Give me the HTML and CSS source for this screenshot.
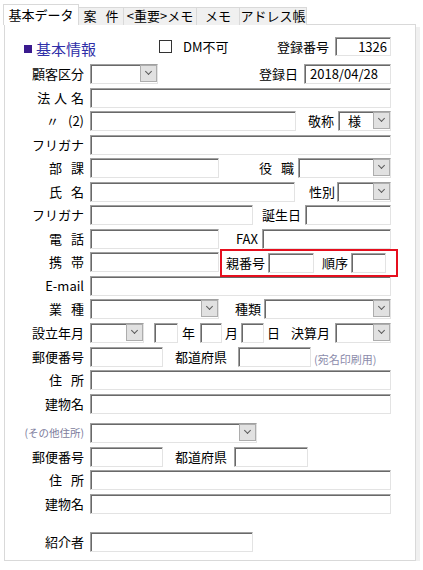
FILE: index.html
```html
<!DOCTYPE html>
<html lang="ja">
<head>
  <meta charset="UTF-8">
  <title>顧客 基本データ</title>
  <meta name="viewport" content="width=device-width, initial-scale=1" />
  <link rel="stylesheet" href="styles.css">
</head>
<body>
  <div class="window">
    <div class="tabs">
      <div class="tab active">基本データ</div>
      <div class="tab wide">案 件</div>
      <div class="tab">&lt;重要&gt;メモ</div>
      <div class="tab">メモ</div>
      <div class="tab">アドレス帳</div>
    </div>

    <div class="panel">
      <div class="head">
        <div class="title"><span class="mark"></span>基本情報</div>
        <span class="check"></span>
        <span class="check-lbl">DM不可</span>
        <span class="side mr6">登録番号</span>
        <div class="in w56 num">1326</div>
      </div>

      <div class="group">
        <div class="row">
          <span class="lbl">顧客区分</span>
          <div class="in sel w68"><span class="val"></span><span class="btn"></span></div>
          <span class="side mr6">登録日</span>
          <div class="in w87 txt">2018/04/28</div>
        </div>
        <div class="row">
          <span class="lbl">法 人 名</span>
          <div class="in full"></div>
        </div>
        <div class="row">
          <span class="lbl wide">〃 (2)</span>
          <div class="in w206"></div>
          <span class="side mr4">敬称</span>
          <div class="in sel w53"><span class="val">様</span><span class="btn"></span></div>
        </div>
        <div class="row">
          <span class="lbl">フリガナ</span>
          <div class="in full"></div>
        </div>
        <div class="row">
          <span class="lbl wide">部 課</span>
          <div class="in w129"></div>
          <span class="side mr4 wide">役 職</span>
          <div class="in sel w93"><span class="val"></span><span class="btn"></span></div>
        </div>
        <div class="row">
          <span class="lbl wide">氏 名</span>
          <div class="in w205"></div>
          <span class="side mr2">性別</span>
          <div class="in sel w54"><span class="val"></span><span class="btn"></span></div>
        </div>
        <div class="row">
          <span class="lbl">フリガナ</span>
          <div class="in w163"></div>
          <span class="side mr4">誕生日</span>
          <div class="in w86"></div>
        </div>
        <div class="row">
          <span class="lbl wide">電 話</span>
          <div class="in w129"></div>
          <span class="side mr4">FAX</span>
          <div class="in w129"></div>
        </div>
        <div class="row">
          <span class="lbl wide">携 帯</span>
          <div class="in w129"></div>
          <div class="oya">
            <span>親番号</span>
            <div class="in w46 ml3"></div>
            <span class="ml8">順序</span>
            <div class="in w35 ml3"></div>
          </div>
        </div>
        <div class="row">
          <span class="lbl">E-mail</span>
          <div class="in full"></div>
        </div>
        <div class="row">
          <span class="lbl wide">業 種</span>
          <div class="in sel w129"><span class="val"></span><span class="btn"></span></div>
          <span class="side mr3">種類</span>
          <div class="in sel w127"><span class="val"></span><span class="btn"></span></div>
        </div>
        <div class="row">
          <span class="lbl">設立年月</span>
          <div class="in sel w54"><span class="val"></span><span class="btn"></span></div>
          <div class="in w24 ml10"></div>
          <span class="ml4">年</span>
          <div class="in w22 ml5"></div>
          <span class="ml3">月</span>
          <div class="in w23 ml3"></div>
          <span class="ml3">日</span>
          <span class="side mr5">決算月</span>
          <div class="in sel w56"><span class="val"></span><span class="btn"></span></div>
        </div>
        <div class="row">
          <span class="lbl">郵便番号</span>
          <div class="in w73"></div>
          <span class="pref ml12">都道府県</span>
          <div class="in w73 ml11"></div>
          <span class="note ml3">(宛名印刷用)</span>
        </div>
        <div class="row">
          <span class="lbl wide">住 所</span>
          <div class="in full"></div>
        </div>
        <div class="row">
          <span class="lbl">建物名</span>
          <div class="in full"></div>
        </div>
      </div>

      <div class="group other">
        <div class="row">
          <span class="lbl small">(その他住所)</span>
          <div class="in sel w167"><span class="val"></span><span class="btn"></span></div>
        </div>
        <div class="row">
          <span class="lbl">郵便番号</span>
          <div class="in w73"></div>
          <span class="pref ml12">都道府県</span>
          <div class="in w74 ml7"></div>
        </div>
        <div class="row">
          <span class="lbl wide">住 所</span>
          <div class="in full"></div>
        </div>
        <div class="row">
          <span class="lbl">建物名</span>
          <div class="in full"></div>
        </div>
      </div>

      <div class="row intro">
        <span class="lbl">紹介者</span>
        <div class="in w163"></div>
      </div>
    </div>
  </div>
</body>
</html>
```

FILE: styles.css
```css
body { margin: 0; background: #fff; font-family: "Noto Sans CJK JP", "Noto Sans", sans-serif; font-size: 13px; color: #000; }
.window { padding: 4px 0 0 4px; width: 412px; }

/* tabs */
.tabs { display: flex; align-items: flex-end; height: 21px; margin: 0 0 -1px -1px; }
.tab { box-sizing: border-box; height: 18px; line-height: 16px; text-align: center; background: #f0f0f0; border-top: 1px solid #d9d9d9; border-right: 1px solid #d9d9d9; white-space: nowrap; }
.tab.active { position: relative; z-index: 1; height: 21px; line-height: 19px; background: #fff; border-left: 1px solid #d9d9d9; }
.tab:nth-child(1) { width: 76px; }
.tab:nth-child(2) { width: 45px; }
.tab:nth-child(3) { width: 73px; }
.tab:nth-child(4) { width: 43px; }
.tab:nth-child(5) { width: 67px; }

.panel { box-sizing: border-box; height: 537px; border: 1px solid #d9d9d9; background: #fff; padding-top: 12px; box-shadow: 4px 3px 0 #f0f0f0; }

/* header line */
.head { display: flex; align-items: center; height: 19px; margin-bottom: 8px; padding-right: 24px; line-height: 19px; }
.title { margin-left: 19px; padding-top: 4px; font-size: 15px; color: #2f2fa8; display: flex; align-items: center; }
.mark { width: 8px; height: 8px; background: #3a1a8e; margin-right: 4px; }
.check { box-sizing: border-box; width: 13px; height: 13px; border: 1px solid #333; background: #fff; margin-left: 63px; flex: none; }
.check-lbl { margin-left: 11px; }

/* rows */
.group { display: flex; flex-direction: column; gap: 3.55px; }
.group.other { margin-top: 9.3px; }
.row { display: flex; align-items: center; height: 20px; line-height: 20px; padding-right: 24px; white-space: nowrap; }
.row.intro { margin-top: 18.4px; }
.lbl { flex: none; width: 79px; margin-right: 6px; text-align: right; word-spacing: 1px; }
.wide { word-spacing: 6px; }
.lbl.small { font-size: 10.5px; color: #7c7c9c; }
.side { flex: 1 1 auto; text-align: right; }
.note { font-size: 11px; color: #8c8cab; margin-top: 5px; }

/* text boxes */
.in { box-sizing: border-box; flex: none; height: 20px; background: #fff; border: 1px solid; border-color: #a0a0a0 #e3e3e3 #e3e3e3 #a0a0a0; box-shadow: inset 1px 1px 0 #696969; line-height: 18px; overflow: hidden; }
.head .in { height: 19px; line-height: 17px; }
.num { text-align: right; padding-right: 3px; }
.txt { padding-left: 5px; }

/* drop-down boxes */
.sel { display: flex; }
.sel .val { flex: 1; padding-left: 9px; }
.btn { box-sizing: border-box; flex: none; width: 17px; height: 17px; background: #e1e1e1; border: 1px solid #adadad; }
.btn::after { content: ""; display: block; width: 4px; height: 4px; margin: 3px auto 0; border-right: 1px solid #5a5a5a; border-bottom: 1px solid #5a5a5a; transform: rotate(45deg); }

/* parent number box */
.oya { box-sizing: border-box; flex: none; display: flex; align-items: center; align-self: flex-start; width: 178px; height: 28px; margin: -3px 0 0 1px; padding-left: 4px; border: 2px solid #e60f1e; position: relative; }

.full { width: 301px; }
.w22 { width: 22px; } .w23 { width: 23px; } .w24 { width: 24px; } .w35 { width: 35px; }
.w46 { width: 46px; } .w53 { width: 53px; } .w54 { width: 54px; } .w56 { width: 56px; }
.w68 { width: 68px; } .w73 { width: 73px; } .w74 { width: 74px; } .w86 { width: 86px; }
.w87 { width: 87px; } .w93 { width: 93px; } .w127 { width: 127px; } .w129 { width: 129px; }
.w163 { width: 163px; } .w167 { width: 167px; } .w205 { width: 205px; } .w206 { width: 206px; }
.ml3 { margin-left: 3px; } .ml4 { margin-left: 4px; } .ml5 { margin-left: 5px; } .ml7 { margin-left: 7px; }
.ml8 { margin-left: 8px; } .ml10 { margin-left: 10px; } .ml11 { margin-left: 11px; } .ml12 { margin-left: 12px; }
.mr2 { margin-right: 2px; } .mr3 { margin-right: 3px; } .mr4 { margin-right: 4px; } .mr5 { margin-right: 5px; } .mr6 { margin-right: 6px; }
```
